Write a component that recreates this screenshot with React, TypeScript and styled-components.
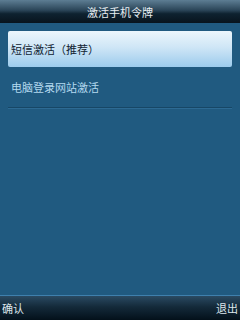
import styled, { createGlobalStyle } from 'styled-components';

const GlobalStyle = createGlobalStyle`
  html, body {
    margin: 0;
    padding: 0;
    width: 240px;
    height: 320px;
    overflow: hidden;
    font-family: "Noto Sans CJK SC", "DejaVu Sans", sans-serif;
  }
`;

const items = [
  { label: '短信激活（推荐）', selected: true },
  { label: '电脑登录网站激活', selected: false },
];

const App = () => {
  return (
    <>
      <GlobalStyle />
      <Styled.Screen>
        <Styled.Header>激活手机令牌</Styled.Header>
        <Styled.Menu>
          {items.map((item) => (
            <Styled.Item key={item.label} $selected={item.selected}>
              {item.label}
            </Styled.Item>
          ))}
        </Styled.Menu>
        <Styled.SoftKeys>
          <span>确认</span>
          <span>退出</span>
        </Styled.SoftKeys>
      </Styled.Screen>
    </>
  );
};

export default App;

const Styled = {
  Screen: styled.div`
    width: 240px;
    height: 320px;
    display: flex;
    flex-direction: column;
    background: #205a80;
  `,
  Header: styled.div`
    height: 23px;
    display: flex;
    align-items: center;
    justify-content: center;
    color: #e8eef2;
    font-size: 11px;
    background: linear-gradient(to bottom, #5d7d93 0%, #2a4457 45%, #0e2230 60%, #08141d 100%);
  `,
  Menu: styled.div`
    flex: 1;
    display: flex;
    flex-direction: column;
    padding: 8px 8px 0;
  `,
  Item: styled.div<{ $selected: boolean }>`
    height: ${({ $selected }) => ($selected ? '36px' : '40px')};
    display: flex;
    align-items: center;
    padding-left: 3px;
    font-size: 11px;
    color: ${({ $selected }) => ($selected ? '#0f2230' : '#b4d9ef')};
    border-radius: ${({ $selected }) => ($selected ? '2px' : '0')};
    background: ${({ $selected }) =>
      $selected ? 'linear-gradient(to bottom, #ecf6fc 0%, #cfe6f6 45%, #9ccbec 100%)' : 'transparent'};
    border-bottom: ${({ $selected }) => ($selected ? 'none' : '1px solid #174766')};
    box-shadow: ${({ $selected }) => ($selected ? 'none' : '0 1px 0 #2d6a93')};
  `,
  SoftKeys: styled.div`
    height: 24px;
    display: flex;
    align-items: center;
    justify-content: space-between;
    padding: 0 2px;
    color: #dde6ec;
    font-size: 11px;
    border-top: 1px solid #3f80ad;
    background: linear-gradient(to bottom, #2a4a62 0%, #142a3a 45%, #03101a 100%);
  `,
};
